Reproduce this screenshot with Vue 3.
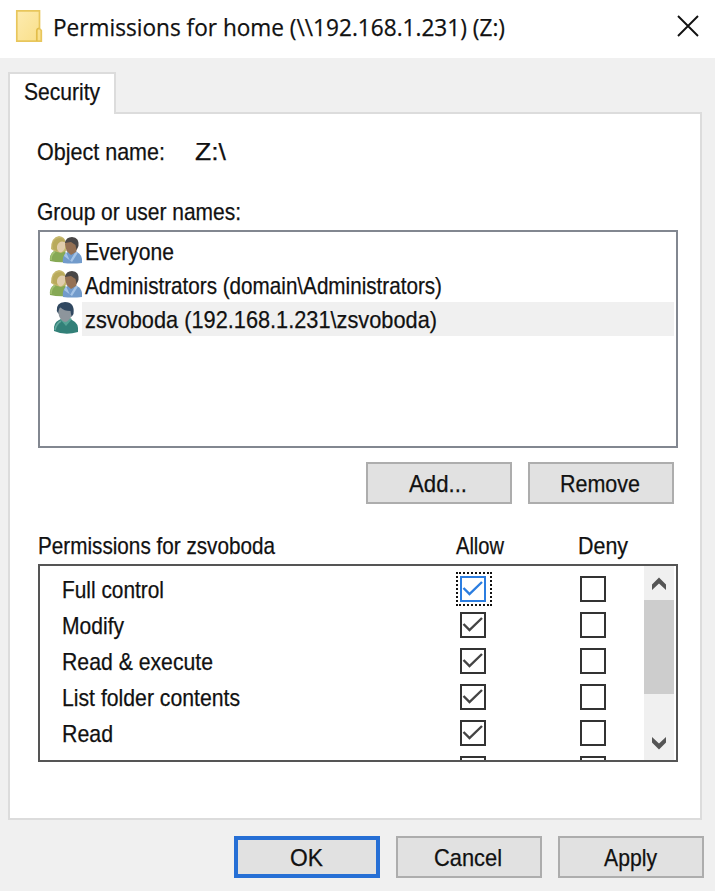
<script setup>
import { h, ref } from 'vue'

// Single-line caption condensed to the dialog font's metrics.
const Caption = (props) =>
  h('svg', { class: 'caption', width: props.w, height: 30 }, [
    h('text', { x: 0, y: 23, textLength: props.w, lengthAdjust: 'spacingAndGlyphs' }, props.text),
  ])
Caption.props = ['text', 'w']

const principals = [
  { name: 'Everyone', w: 89, group: true },
  { name: 'Administrators (domain\\Administrators)', w: 357, group: true },
  { name: 'zsvoboda (192.168.1.231\\zsvoboda)', w: 352, group: false },
]
const selected = ref(2)

const permissions = ref([
  { name: 'Full control', w: 102, allow: true, deny: false },
  { name: 'Modify', w: 62, allow: true, deny: false },
  { name: 'Read & execute', w: 151, allow: true, deny: false },
  { name: 'List folder contents', w: 178, allow: true, deny: false },
  { name: 'Read', w: 51, allow: true, deny: false },
  { name: '', w: 0, allow: false, deny: false },
])
</script>

<template>
  <div class="dialog">
    <header class="titlebar">
      <svg class="folder" width="28" height="34" viewBox="0 0 28 34">
        <defs>
          <linearGradient id="fold" x1="0" y1="0" x2="1" y2="1">
            <stop offset="0" stop-color="#fdebb0" />
            <stop offset="1" stop-color="#f9df88" />
          </linearGradient>
        </defs>
        <path d="M1.800 1.800H24.500V19.500L26.300 21.500V32.200H1.800Z" fill="url(#fold)" stroke="#e8c65c" stroke-width="1.7" />
        <path d="M21.800 32V21.500Q22 19.300 24.500 19.300" fill="none" stroke="#e2bd4b" stroke-width="1.7" />
      </svg>
      <Caption class="title" text="Permissions for home (\\192.168.1.231) (Z:)" :w="452" />
      <svg class="close" width="24" height="24" viewBox="0 0 24 24">
        <path d="M2 2L22 22M22 2L2 22" stroke="#111" stroke-width="1.9" />
      </svg>
    </header>

    <main class="body">
      <div class="tab"><Caption text="Security" :w="76" /></div>
      <section class="panel">
        <div class="object">
          <Caption text="Object name:" :w="128" />
          <Caption text="Z:\" :w="31" />
        </div>
        <Caption class="group-title" text="Group or user names:" :w="204" />
        <div class="users">
          <div v-for="(p, i) in principals" :key="p.name" class="user" @click="selected = i">
            <svg v-if="p.group" class="avatar" width="34" height="34" viewBox="0 0 34 34">
              <path d="M2 27Q1 20 6 17L10 14L17 16L20 28Q10 29 2 27Z" fill="#86a955" />
              <path d="M3 26Q3 20 7 17.500" fill="none" stroke="#a3c272" stroke-width="1.5" />
              <path d="M3 15Q3 3 11 2Q17 2.500 18 9V17L13 19L6 17Z" fill="#c6b86e" />
              <path d="M8.500 8Q12 5 17 8V14Q15 19 11 18L8.500 14Z" fill="#e0cdac" />
              <path d="M4.500 12Q5 4 12 4Q16 4 17 8Q11 6 9 12V17L5 15Z" fill="#b9aa5c" />
              <path d="M15 29Q14 22 18 19L23 16L29 18Q35 21 34 29Q24 30 15 29Z" fill="#729bcb" />
              <path d="M18 18L22 27L28 17L30 18.500L24 28L16 22Z" fill="#a6c4e6" />
              <path d="M17 10Q18 4 24 4Q31 4 30 12L28 18L23 21L18.500 17Z" fill="#957154" />
              <path d="M16.800 9Q18 3 24 3Q31.500 3.500 30.500 12L28.500 16L27.500 11L23 8Z" fill="#494747" />
            </svg>
            <svg v-else class="avatar" width="34" height="34" viewBox="0 0 34 34">
              <path d="M6 29Q5 21 11 18L17 15L24 18Q31 21 30 30Q17 34 6 29Z" fill="#328078" />
              <path d="M7 28Q8 22 13 19" fill="none" stroke="#62a79d" stroke-width="1.8" />
              <path d="M12 17L18 24L24 17L20 15Z" fill="#56a396" />
              <path d="M10 8Q10 2 17 2Q25 2 24.500 10L23 15Q20 20 17 20Q13 19 11 14Z" fill="#8d959c" />
              <path d="M8.800 9Q8 .5 17 0Q27 0 25.500 12L23.500 15L22.500 9Q16 9 12.500 5.500Q10.500 6 10.500 12Z" fill="#304860" />
            </svg>
            <div class="user-name" :class="{ selected: selected === i }">
              <Caption :text="p.name" :w="p.w" />
            </div>
          </div>
        </div>

        <div class="actions">
          <button class="btn"><Caption text="Add..." :w="58" /></button>
          <button class="btn"><Caption text="Remove" :w="80" /></button>
        </div>

        <div class="perm-head">
          <Caption text="Permissions for zsvoboda" :w="237" />
          <Caption text="Allow" :w="48" />
          <Caption text="Deny" :w="50" />
        </div>
        <div class="perm-box">
          <div class="perm-list">
            <div v-for="(p, i) in permissions" :key="i" class="perm">
              <Caption class="perm-name" :text="p.name" :w="p.w" />
              <span class="check" :class="{ focus: i === 0 }" @click="p.allow = !p.allow">
                <svg v-if="p.allow" width="22" height="22" viewBox="0 0 22 22">
                  <path d="M1.500 10L7.500 16L20 4" />
                </svg>
              </span>
              <span class="check" @click="p.deny = !p.deny"></span>
            </div>
          </div>
          <div class="scrollbar">
            <svg width="30" height="34" viewBox="0 0 30 34"><path d="M8 18.500L15 11.500L22 18.500V24L15 17.500L8 24Z" /></svg>
            <div class="thumb"></div>
            <svg class="down" width="30" height="34" viewBox="0 0 30 34"><path d="M8 11L15 17.500L22 11V16.500L15 23.500L8 16.500Z" /></svg>
          </div>
        </div>
      </section>

      <footer class="footer">
        <button class="btn default"><Caption text="OK" :w="33" /></button>
        <button class="btn"><Caption text="Cancel" :w="68" /></button>
        <button class="btn"><Caption text="Apply" :w="53" /></button>
      </footer>
    </main>
  </div>
</template>

<style>
body { background: #fff; }
.caption {
  display: block;
  flex: none;
  overflow: visible;
  fill: #111;
  stroke: #111;
  stroke-width: 0.25px;
  font: 24px "Liberation Sans", Arial, sans-serif;
}
</style>

<style scoped>
* { box-sizing: border-box; }
.dialog {
  width: 715px;
  height: 891px;
  display: flex;
  flex-direction: column;
  background: #f0f0f0;
}
.titlebar {
  height: 58px;
  display: flex;
  align-items: flex-start;
  padding: 9px 15px 0 15px;
  background: #fff;
  margin-right: -1px;
}
.folder { flex: none; }
.title {
  margin: 4px 0 0 10px;
  font: 24.5px "Open Sans", "Noto Sans", sans-serif;
}
.close { margin: 5px 1px 0 auto; }
.body { flex: 1; padding: 14px 11px 0 8px; }
.tab {
  position: relative;
  z-index: 1;
  width: 108px;
  height: 42px;
  padding: 3px 0 0 14px;
  margin-bottom: -2px;
  background: #fff;
  border: 2px solid #dcdcdc;
  border-bottom: 0;
}
.panel {
  width: 694px;
  height: 708px;
  padding: 23px 22px 0 28px;
  background: #fff;
  border: 2px solid #dcdcdc;
}
.object { display: flex; gap: 30px; margin-left: -1px; }
.group-title { margin: 30px 0 0 -1px; }
.users {
  height: 218px;
  margin-top: 3px;
  padding: 2px;
  border: 2px solid #828790;
}
.user { display: flex; height: 34px; padding-left: 6px; }
.avatar { flex: none; }
.user-name { flex: 1; padding: 3px 0 0 3px; }
.user-name.selected { background: #f0f0f0; }
.actions {
  display: flex;
  justify-content: flex-end;
  gap: 16px;
  margin: 14px 4px 0 0;
}
.btn {
  display: flex;
  align-items: flex-start;
  justify-content: center;
  width: 146px;
  height: 42px;
  padding: 5px 2px 0 0;
  background: #e1e1e1;
  border: 2px solid #adadad;
  border-radius: 0;
}
.perm-head {
  display: grid;
  grid-template-columns: 418px 122px auto;
  margin-top: 27px;
}
.perm-box {
  display: flex;
  height: 198px;
  margin-top: 3px;
  border: 2px solid #555;
  padding-right: 2px;
}
.perm-list { flex: 1; overflow: hidden; padding-top: 5px; }
.perm {
  display: grid;
  grid-template-columns: 398px 120px auto;
  align-items: center;
  height: 36px;
  padding-left: 22px;
}
.perm-name { margin-top: 2px; }
.check {
  width: 26px;
  height: 26px;
  border: 2px solid #333;
}
.check svg { display: block; }
.check path { fill: none; stroke: #444; stroke-width: 2.4; }
.check.focus { position: relative; border-color: #2b7de0; }
.check.focus::after {
  content: "";
  position: absolute;
  inset: -6px -8px -6px -6px;
  border: 2px dotted #111;
}
.check.focus path { stroke: #2b7de0; }
.scrollbar {
  display: flex;
  flex-direction: column;
  width: 30px;
  background: #f0f0f0;
}
.scrollbar path { fill: #555; }
.thumb { height: 94px; background: #cdcdcd; }
.down { margin-top: auto; }
.footer {
  display: flex;
  justify-content: flex-end;
  gap: 16px;
  margin-top: 16px;
}
.btn.default { border: 4px solid #266fd5; padding-top: 3px; }
</style>
